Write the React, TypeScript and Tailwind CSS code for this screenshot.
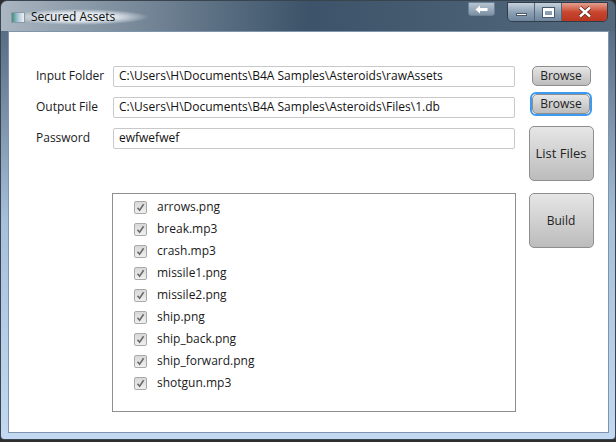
import React from "react";

const files = [
  "arrows.png",
  "break.mp3",
  "crash.mp3",
  "missile1.png",
  "missile2.png",
  "ship.png",
  "ship_back.png",
  "ship_forward.png",
  "shotgun.mp3",
];

function CheckBox() {
  return (
    <span className="w-[13px] h-[13px] rounded-[2px] border border-[#a9a9a9] bg-gradient-to-b from-[#d8d8d8] to-[#f0f0f0] flex items-center justify-center">
      <svg width="9" height="9" viewBox="0 0 9 9">
        <path d="M1.5 4.8 L3.6 7.2 L7.6 1.2" fill="none" stroke="#6b6b6b" strokeWidth="1.6" />
      </svg>
    </span>
  );
}

function Field({ label, value }: { label: string; value: string }) {
  return (
    <div className="flex items-center h-[20px]">
      <span className="w-[77px] text-[#1a1a1a]">{label}</span>
      <div className="w-[402px] h-[21px] border border-[#c9c9c9] rounded-[2px] bg-white flex items-center pl-[5px] text-[#111]">
        {value}
      </div>
    </div>
  );
}

function FxButton({
  children,
  className,
}: {
  children: React.ReactNode;
  className: string;
}) {
  return (
    <div
      className={
        "flex items-center justify-center rounded-[5px] border border-[#8e8e8e] bg-gradient-to-b from-[#e6e6e6] to-[#bcbcbc] text-[#222] " +
        className
      }
    >
      {children}
    </div>
  );
}

export default function App() {
  return (
    <div
      className="w-[616px] h-[442px] overflow-hidden bg-[#2e2e2e] text-[12px]"
      style={{ fontFamily: '"Open Sans", "Noto Sans", sans-serif' }}
    >
      <div className="relative w-[616px] h-[440px] rounded-t-[7px] rounded-b-[4px] border border-[#3a444e] bg-gradient-to-b from-[#4c6176] via-[#a7c0da] to-[#c2d9f1] flex flex-col">
        {/* Title bar */}
        <div className="h-[30px] rounded-t-[6px] bg-gradient-to-r from-[#aab6c1] via-[#3c5369] to-[#54697d] flex items-start pt-[8px] pl-[9px]">
          <div className="flex items-center gap-[6px] bg-[radial-gradient(ellipse_closest-side,rgba(232,238,243,0.95)_50%,rgba(210,220,228,0)_100%)] pl-[1px] pr-[34px] py-[1px]">
            <span className="w-[14px] h-[11px] border border-[#8a9aa8] bg-gradient-to-r from-[#3f8f78] via-[#a8c7d8] to-[#f0f0f0]" />
            <span className="text-[12px] text-[#0d0d0d] leading-[14px]">Secured Assets</span>
          </div>
        </div>

        {/* Caption buttons */}
        <div className="absolute top-[1px] left-[467px] w-[27px] h-[14px] rounded-b-[3px] border border-[#6d8194] bg-gradient-to-b from-[#b7c4d1] to-[#7d91a5] flex items-center justify-center">
          <svg width="13" height="9" viewBox="0 0 13 9">
            <path d="M0.5 4.5 L5 0.5 L5 3 L12.5 3 L12.5 6 L5 6 L5 8.5 Z" fill="#fff" />
          </svg>
        </div>
        <div className="absolute top-[1px] left-[506px] h-[20px] flex rounded-b-[5px] border border-[#2f3d4a] overflow-hidden">
          <div className="w-[27px] h-full border-r border-[#55687a] bg-gradient-to-b from-[#c6d1dc] via-[#8ea2b6] to-[#6e859c] flex items-end justify-center pb-[5px]">
            <span className="w-[11px] h-[3px] bg-white border border-[#4a5a6a]" />
          </div>
          <div className="w-[27px] h-full border-r border-[#55687a] bg-gradient-to-b from-[#c6d1dc] via-[#8ea2b6] to-[#6e859c] flex items-center justify-center">
            <span className="w-[11px] h-[9px] border-[2px] border-white border-t-[3px] outline outline-1 outline-[#4a5a6a]" />
          </div>
          <div className="w-[45px] h-full bg-gradient-to-b from-[#e3a08f] via-[#c94530] to-[#b8361f] flex items-center justify-center">
            <svg width="14" height="12" viewBox="0 0 14 12">
              <path d="M2 1.5 L12 10.5 M12 1.5 L2 10.5" stroke="#5a2418" strokeWidth="4" />
              <path d="M2 1.5 L12 10.5 M12 1.5 L2 10.5" stroke="#fff" strokeWidth="2.4" />
            </svg>
          </div>
        </div>

        {/* Client area */}
        <div className="ml-[7px] mr-[6px] w-[601px] h-[402px] border border-[#7f95ab] bg-white">
          <div className="flex pt-[34px] pl-[27px]">
            <div className="flex flex-col gap-[11px]">
              <Field label="Input Folder" value="C:\Users\H\Documents\B4A Samples\Asteroids\rawAssets" />
              <Field label="Output File" value="C:\Users\H\Documents\B4A Samples\Asteroids\Files\1.db" />
              <Field label="Password" value="ewfwefwef" />
              <div className="ml-[76px] mt-[34px] w-[404px] h-[219px] border border-[#8e8e8e] pt-[2px] pl-[21px]">
                {files.map((f) => (
                  <div key={f} className="h-[22px] flex items-center gap-[10px] text-[#1a1a1a]">
                    <CheckBox />
                    <span>{f}</span>
                  </div>
                ))}
              </div>
            </div>
            <div className="flex flex-col items-center ml-[12px] w-[66px]">
              <FxButton className="w-[59px] h-[20px]">Browse</FxButton>
              <div className="mt-[6px] rounded-[6px] border-[2px] border-[#3c9bf0]">
                <FxButton className="w-[58px] h-[20px]">Browse</FxButton>
              </div>
              <FxButton className="mt-[10px] w-[65px] h-[55px] text-[13px]">List Files</FxButton>
              <FxButton className="mt-[12px] w-[65px] h-[55px]">Build</FxButton>
            </div>
          </div>
        </div>
      </div>
    </div>
  );
}
